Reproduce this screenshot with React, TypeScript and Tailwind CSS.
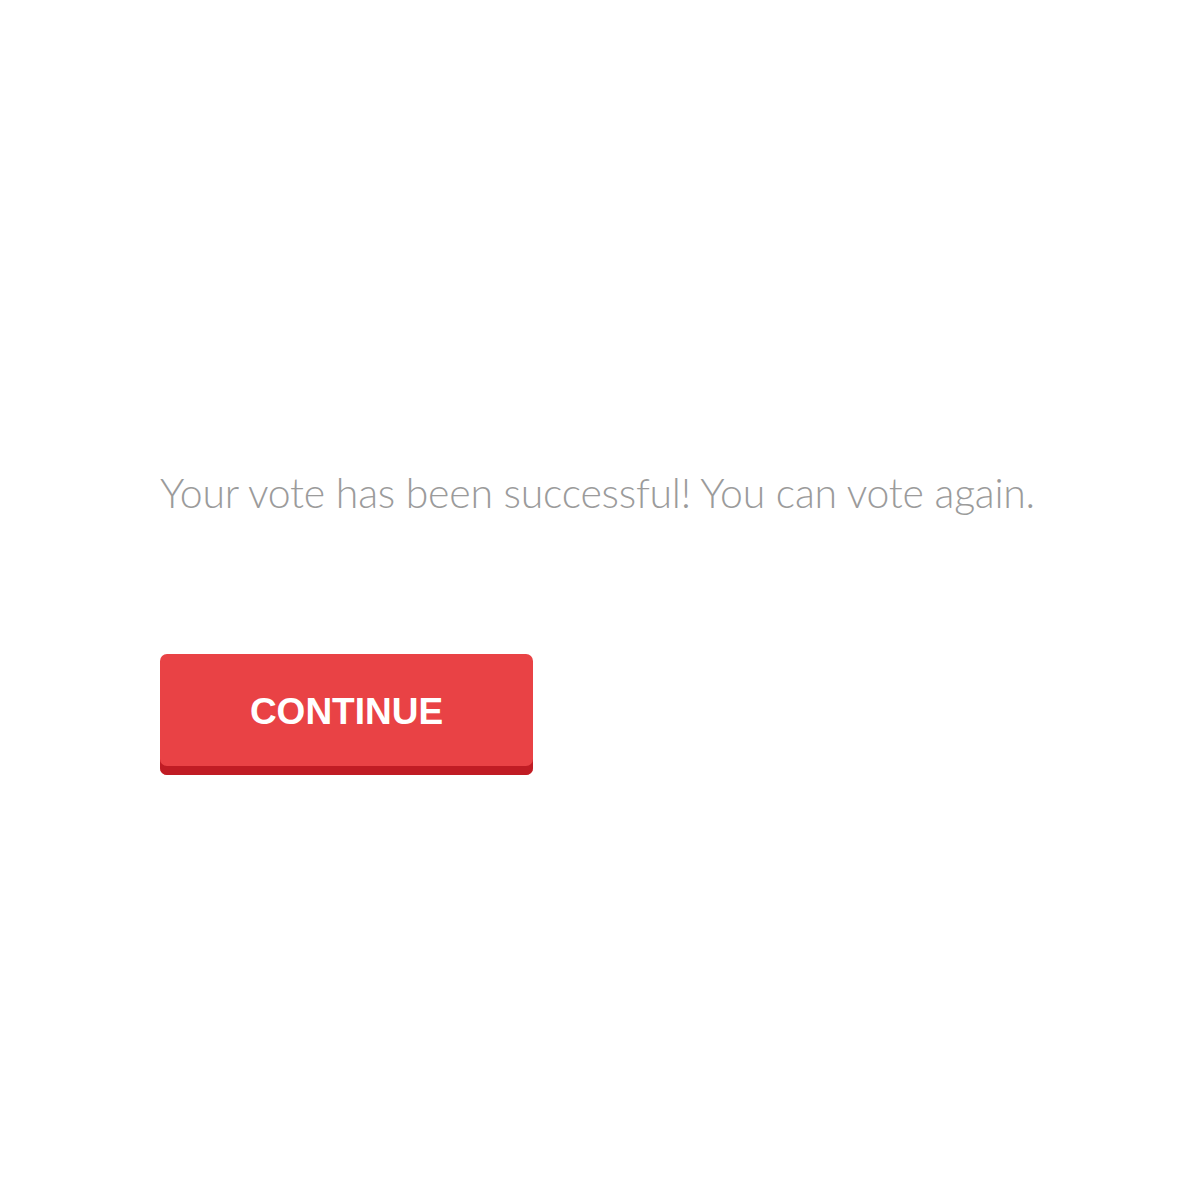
export default function App() {
  return (
    <div className="min-h-[1200px] w-full bg-white pl-[160px] pt-[467px]">
      <p className="font-['Lato','Liberation_Sans',sans-serif] text-[41px] leading-[52px] font-light tracking-[-0.25px] text-[#9b9b9b]">
        Your vote has been successful! You can vote again.
      </p>

      <button className="mt-[135px] flex h-[121px] w-[373px] items-center justify-center rounded-[7px] bg-[#e94245] pb-[6px] font-['Liberation_Sans',Arial,sans-serif] text-[37px] font-bold text-white shadow-[inset_0_-9px_0_#c01c24]">
        CONTINUE
      </button>
    </div>
  )
}
